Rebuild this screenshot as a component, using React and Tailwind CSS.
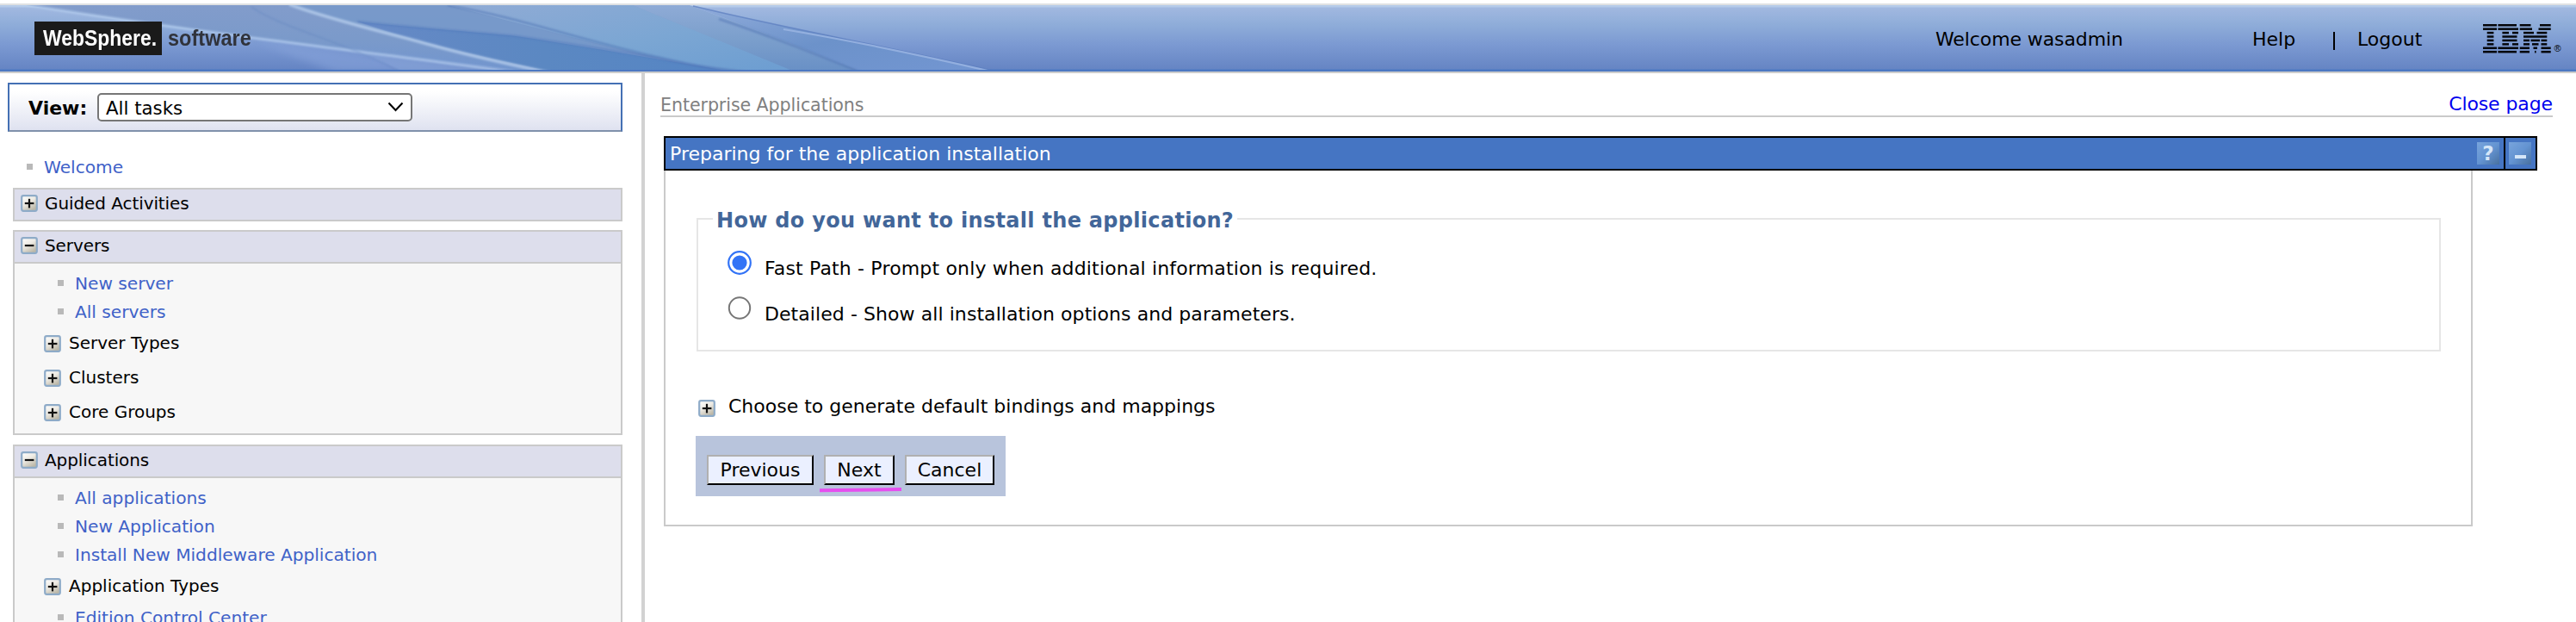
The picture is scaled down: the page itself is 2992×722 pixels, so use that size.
const SANS = "font-['DejaVu_Sans',Verdana,sans-serif]";

function ToggleIcon({ open, className = '' }) {
  return (
    <svg width="20" height="20" viewBox="0 0 20 20" className={`shrink-0 ${className}`}>
      <defs>
        <linearGradient id="toggleFace" x1="0" y1="0" x2="0.6" y2="1">
          <stop offset="0" stopColor="#ffffff" />
          <stop offset="0.5" stopColor="#eeebe4" />
          <stop offset="1" stopColor="#bdb8a8" />
        </linearGradient>
      </defs>
      <rect x="1.2" y="1.2" width="17.6" height="17.6" rx="2" fill="url(#toggleFace)" stroke="#8eabc8" strokeWidth="2.2" />
      <rect x="4.8" y="8.9" width="10.6" height="2.2" fill="#111" />
      {!open && <rect x="8.9" y="4.8" width="2.2" height="10.6" fill="#111" />}
    </svg>
  );
}

function LinkRow({ label, indent = true }) {
  return (
    <div className={`flex h-[33px] items-center ${indent ? 'pl-[50px]' : 'pl-[31px]'}`}>
      <span className="size-[7px] shrink-0 bg-[#b9b9b9]" />
      <a className="mt-[2px] ml-[13px] text-[20.2px] leading-[31px] tracking-[-0.04px] whitespace-nowrap text-[#3f62c8]">{label}</a>
    </div>
  );
}

function GroupRow({ label }) {
  return (
    <div className="flex h-10 items-center pl-[34px]">
      <ToggleIcon className="mt-px" />
      <span className="ml-[9px] text-[20px] leading-10 whitespace-nowrap">{label}</span>
    </div>
  );
}

function Section({ title, open, children, className = '' }) {
  return (
    <div className={`mr-[22px] ml-[15px] shrink-0 border-2 border-[#cacaca] ${className}`}>
      <div className="flex h-[35px] items-start bg-[#dddeec] pl-[7px]">
        <ToggleIcon open={open} className="mt-[6px]" />
        <span className="mt-px ml-[8px] text-[20px] leading-[30px] tracking-[-0.08px] whitespace-nowrap">{title}</span>
      </div>
      {open && <div className="border-t-2 border-[#cacaca] bg-[#f7f7f7] pt-[6px] pb-[5px]">{children}</div>}
    </div>
  );
}

function Waves() {
  return (
    <svg width="1200" height="77" viewBox="0 6 1200 77" className="absolute top-0 left-0">
      <defs>
        <linearGradient id="dusk" x1="0" y1="0" x2="0" y2="1">
          <stop offset="0" stopColor="#829ccb" />
          <stop offset="0.5" stopColor="#7b9aca" />
          <stop offset="1" stopColor="#7195ce" />
        </linearGradient>
        <linearGradient id="mist" x1="0" y1="0" x2="0" y2="1">
          <stop offset="0" stopColor="#8fabd6" />
          <stop offset="0.5" stopColor="#7b9fcc" />
          <stop offset="1" stopColor="#688fc5" />
        </linearGradient>
        <linearGradient id="sky" x1="0" y1="0" x2="1" y2="1">
          <stop offset="0" stopColor="#90abd5" />
          <stop offset="0.55" stopColor="#7ba6d3" />
          <stop offset="1" stopColor="#6c9dd1" />
        </linearGradient>
        <linearGradient id="deep" x1="0" y1="0" x2="1" y2="0">
          <stop offset="0" stopColor="#6689c6" />
          <stop offset="0.5" stopColor="#5b88c2" />
          <stop offset="1" stopColor="#5585c4" />
        </linearGradient>
        <linearGradient id="fold" x1="0" y1="0" x2="1" y2="1">
          <stop offset="0" stopColor="#92addb" />
          <stop offset="0.5" stopColor="#6c92ca" />
          <stop offset="1" stopColor="#7396d2" />
        </linearGradient>
        <filter id="soft" x="-5%" y="-20%" width="110%" height="140%">
          <feGaussianBlur stdDeviation="1.1" />
        </filter>
        <filter id="haze" x="-10%" y="-40%" width="120%" height="180%">
          <feGaussianBlur stdDeviation="4" />
        </filter>
      </defs>
      <path d="M30 6 C190 30 400 58 610 83 L1000 83 L800 6 Z" fill="url(#dusk)" />
      <path d="M300 49 C400 60 500 73 590 84 L390 84 C360 72 330 62 300 49 Z" fill="#86a3da" opacity=".6" filter="url(#haze)" />
      <path d="M338 6 L520 6 C600 22 680 45 850 83 L635 83 C600 75 560 68 500 52 C450 38 400 24 338 6 Z" fill="#7699c9" opacity=".8" />
      <path d="M400 58 C460 66 530 73 600 83 L466 83 C450 74 430 66 400 58 Z" fill="#8eaadb" opacity=".35" filter="url(#soft)" />
      <path d="M520 6 L735 6 L925 83 L850 83 C760 70 640 36 520 6 Z" fill="url(#sky)" />
      <path d="M735 6 L800 6 L1010 84 L925 84 Z" fill="url(#mist)" />
      <path d="M415 25 C480 32 560 38 600 42 C680 54 760 68 850 83 L640 83 C560 66 480 48 415 25 Z" fill="url(#deep)" />
      <path d="M800 6 C900 30 1030 55 1160 83 L1000 83 C930 55 880 34 800 6 Z" fill="url(#fold)" />
      <g fill="none" filter="url(#soft)">
        <path d="M20 4 C190 32 390 56 610 85" stroke="#b4cdee" strokeWidth="3" opacity=".75" />
        <path d="M336 5 C380 22 450 38 500 52 S590 74 640 85" stroke="#b0c9ea" strokeWidth="3.6" opacity=".85" />
        <path d="M520 6 C600 20 660 42 745 62 S820 77 870 84" stroke="#5277b5" strokeWidth="2.6" opacity=".6" />
        <path d="M415 25 C480 32 560 38 600 42 C680 53 760 66 850 84" stroke="#4f78bb" strokeWidth="2.4" opacity=".5" />
        <path d="M292 8 C325 32 400 48 466 84" stroke="#5f82be" strokeWidth="2" opacity=".35" />
        <path d="M835 22 C890 40 940 60 1000 84" stroke="#5275b4" strokeWidth="2.4" opacity=".6" />
      </g>
      <path d="M805 7 C900 30 1020 52 1158 83" fill="none" stroke="#597bbd" strokeWidth="1.6" opacity=".7" />
      <path d="M910 34 C1000 49 1070 64 1160 85" fill="none" stroke="#9cb6e4" strokeWidth="2.2" opacity=".8" />
      <rect x="0" y="81" width="1200" height="2" fill="#4c78c2" />
    </svg>
  );
}

const IBM_ROWS = [
  [[0, 16], [17.4, 39], [42.7, 55.5], [66, 78.7]],
  [[0, 16], [17.4, 41], [42.7, 57], [64.5, 78.7]],
  [[4.7, 12.4], [22.4, 30], [34, 41], [47, 59], [62.5, 74.3]],
  [[4.7, 12.4], [22.4, 39.5], [47, 74.3]],
  [[4.7, 12.4], [22.4, 39.5], [47, 54], [55.5, 66], [67.5, 74.3]],
  [[4.7, 12.4], [22.4, 30], [34, 41], [47, 54], [57, 64.5], [67.5, 74.3]],
  [[0, 16], [17.4, 41], [42.7, 54], [58.5, 63], [67.5, 78.7]],
  [[0, 16], [17.4, 39], [42.7, 54], [60, 61.6], [67.5, 78.7]],
];

function IbmLogo() {
  return (
    <div className="flex items-end">
      <svg width="80" height="34" viewBox="0 0 80 34">
        {IBM_ROWS.map((row, r) =>
          row.map(([a, b]) => <rect key={`${r}-${a}`} x={a} y={r * 4.42} width={b - a} height="2.5" fill="#05060a" />),
        )}
      </svg>
      <span className="ml-[2.5px] font-['Liberation_Sans',sans-serif] text-[11px] leading-[11px]">®</span>
    </div>
  );
}

function Header() {
  return (
    <header className="h-[85px] shrink-0 pt-1">
      <div className="relative h-[81px] border-y-2 border-t-[#dfe1e2] border-b-[#cdcdcd] bg-[linear-gradient(to_bottom,#b5cbe9_0px,#b5cbe9_2px,#a1b8e0_3px,#8fadd9_22px,#7c9ad2_45px,#6685c4_74px,#4c78c2_75px)]">
        <Waves />
        <div className="relative flex h-full items-start">
          <div className="mt-[19px] ml-[40px] flex h-[39px] w-[148px] items-center bg-[#1a1a1a] pl-[10px]">
            <span className="origin-left scale-x-[0.882] font-['Liberation_Sans',sans-serif] text-[26px] leading-[39px] font-bold text-white">WebSphere.</span>
          </div>
          <div className="mt-[19px] ml-[7px] w-[120px]">
            <span className="inline-block origin-left scale-x-[0.905] font-['Liberation_Sans',sans-serif] text-[26px] leading-[39px] font-bold text-[#30333b]">software</span>
          </div>
          <div className="ml-auto flex h-[77px] pt-[25px] text-[22px] leading-[30px] whitespace-nowrap">
            <span className="w-[368px] tracking-[-0.1px]">Welcome wasadmin</span>
            <span className="w-[94px]">Help</span>
            <span className="mt-[6px] h-[21px] w-[2px] bg-black" />
            <span className="ml-[26px] w-[146px]">Logout</span>
          </div>
          <div className="mt-[22px] w-[108px]">
            <IbmLogo />
          </div>
        </div>
      </div>
    </header>
  );
}

function Sidebar() {
  return (
    <nav className="flex w-[749px] shrink-0 flex-col border-r-4 border-[#d2d2d2]">
      <div className="mt-[11px] mr-[22px] ml-[9px] flex h-[57px] shrink-0 items-center border-2 border-[#4470b4] border-b-[#8091ab] bg-[linear-gradient(to_bottom,#ffffff_15%,#dfe2f0)] pl-[22px]">
        <span className="mt-[2px] w-[80px] text-[22px] leading-[28px] font-bold">View:</span>
        <div className="flex h-[33px] w-[366px] items-center justify-between rounded-[5px] border-2 border-[#767676] bg-white pr-[8px] pl-[8px]">
          <span className="mt-[2px] text-[21.3px] leading-[27px]">All tasks</span>
          <svg width="19" height="12" viewBox="0 0 19 12" className="-mt-[2px]">
            <path d="M1.5 1.5 L9.5 10 L17.5 1.5" fill="none" stroke="#000" strokeWidth="2.1" />
          </svg>
        </div>
      </div>
      <div className="mt-[24px]">
        <LinkRow label="Welcome" indent={false} />
      </div>
      <Section title="Guided Activities" className="mt-[8px]" />
      <Section title="Servers" open className="mt-[10px]">
        <LinkRow label="New server" />
        <LinkRow label="All servers" />
        <GroupRow label="Server Types" />
        <GroupRow label="Clusters" />
        <GroupRow label="Core Groups" />
      </Section>
      <Section title="Applications" open className="mt-[11px]">
        <LinkRow label="All applications" />
        <LinkRow label="New Application" />
        <LinkRow label="Install New Middleware Application" />
        <GroupRow label="Application Types" />
        <LinkRow label="Edition Control Center" />
      </Section>
    </nav>
  );
}

function Radio({ checked, label, textClass }) {
  return (
    <div className="flex h-[53px] items-center pl-[34px]">
      <svg width="28" height="28" viewBox="0 0 28 28" className="-mt-[14px] shrink-0">
        {checked ? (
          <>
            <circle cx="14" cy="14" r="12.8" fill="#fff" stroke="#3273f6" strokeWidth="2.2" />
            <circle cx="14" cy="14" r="8.6" fill="#3273f6" />
          </>
        ) : (
          <circle cx="14" cy="13.5" r="12.2" fill="#fff" stroke="#767676" strokeWidth="2" />
        )}
      </svg>
      <span className={`ml-[15px] text-[22px] leading-[53px] whitespace-nowrap ${textClass}`}>{label}</span>
    </div>
  );
}

function PushButton({ label, className }) {
  return (
    <button className={`h-[35px] border-2 border-t-[#b0b0b0] border-r-black border-b-black border-l-[#b0b0b0] bg-[#ebf0ff] pt-px text-center text-[22px] leading-[30px] ${className}`}>
      {label}
    </button>
  );
}

const TILE = 'flex size-[26px] items-center justify-center bg-[linear-gradient(135deg,#78a4dc_0%,#6494d2_50%,#48709f_100%)]';

function Content() {
  return (
    <main className="flex flex-1 flex-col pr-[27px] pl-[18px]">
      <div className="flex h-[51px] items-end justify-between border-b-2 border-[#cacaca]">
        <span className="text-[20.6px] leading-[24px] tracking-[-0.08px] text-[#808080]">Enterprise Applications</span>
        <a className="text-[22px] leading-[26px] tracking-[-0.1px] text-[#0000ee]">Close page</a>
      </div>
      <section className="mt-[22px] ml-[4px]">
        <div className="flex h-10 w-[2176px] items-stretch border-2 border-black bg-[#4575c3]">
          <h1 className="flex-1 pt-px pl-[5px] text-[22px] leading-[35px] text-white">Preparing for the application installation</h1>
          <div className="flex w-[37px] items-center pl-[6px]">
            <div className={TILE}>
              <span className="font-['DejaVu_Sans',sans-serif] text-[23px] leading-[26px] font-bold text-[#d5e6f8]">?</span>
            </div>
          </div>
          <div className="flex w-[37px] items-center border-l-2 border-black pl-[4px]">
            <div className={TILE}>
              <span className="mt-[8px] h-[4px] w-[13px] bg-[#d5e6f8]" />
            </div>
          </div>
        </div>
        <div className="flex w-[2101px] flex-col border-x-2 border-b-2 border-[#cacaca] pb-[33px]">
          <div className="mt-[55px] ml-[36px] h-[155px] w-[2026px] border-2 border-[#e6e6e6]">
            <h2 className="-mt-[15px] ml-[17px] h-8 w-[609px] bg-white pl-[4px] text-[24px] leading-8 font-bold tracking-[0.3px] whitespace-nowrap text-[#426699]">
              How do you want to install the application?
            </h2>
            <div className="mt-[13px]">
              <Radio checked textClass="tracking-[0.16px]" label="Fast Path - Prompt only when additional information is required." />
              <Radio textClass="tracking-[0.07px]" label="Detailed - Show all installation options and parameters." />
            </div>
          </div>
          <div className="mt-[50px] ml-[38px] flex h-7 items-center">
            <ToggleIcon className="mt-[4px]" />
            <span className="ml-[15px] text-[22px] leading-7 whitespace-nowrap">Choose to generate default bindings and mappings</span>
          </div>
          <div className="relative mt-[20px] ml-[35px] flex h-[70px] w-[360px] gap-[12px] bg-[#b8c4dc] pt-[22px] pl-[13px]">
            <PushButton label="Previous" className="w-[124px]" />
            <PushButton label="Next" className="w-[82px]" />
            <PushButton label="Cancel" className="w-[104px]" />
            <svg width="96" height="8" viewBox="0 0 96 8" className="absolute top-[59px] left-[144px]">
              <path d="M0 4.3 L95 3" stroke="#e64ef0" strokeWidth="4" />
            </svg>
          </div>
        </div>
      </section>
    </main>
  );
}

export default function App() {
  return (
    <div className={`flex h-[722px] w-full flex-col overflow-hidden bg-white text-black ${SANS}`}>
      <Header />
      <div className="flex min-h-0 flex-1">
        <Sidebar />
        <Content />
      </div>
    </div>
  );
}
